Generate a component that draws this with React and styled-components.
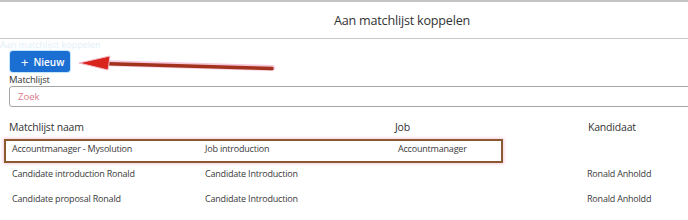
import React from 'react';
import styled, { createGlobalStyle } from 'styled-components';

const GlobalStyle = createGlobalStyle`
  html, body {
    margin: 0;
    padding: 0;
    background: #ffffff;
  }
  body {
    font-family: 'Open Sans', 'Noto Sans', sans-serif;
    color: #333333;
    overflow: hidden;
  }
`;

const Page = styled.div`
  position: relative;
  width: 688px;
  height: 220px;
  overflow: hidden;
  border-top: 2px solid #c4c4c4;
  box-sizing: border-box;
`;

const TitleBar = styled.div`
  height: 37px;
  display: flex;
  align-items: center;
  justify-content: center;
  border-bottom: 1px solid #c9c9c9;
  padding-left: 116px;
  box-sizing: border-box;
`;

const Title = styled.h2`
  margin: 0;
  font-size: 12.6px;
  letter-spacing: -0.2px;
  font-weight: 400;
  color: #333;
`;

const Ghost = styled.div`
  height: 11px;
  font-size: 9px;
  line-height: 11px;
  color: #e2effa;
  white-space: nowrap;
`;

const Content = styled.div`
  padding: 0 0 0 9px;
`;

const NewButton = styled.button`
  display: flex;
  align-items: center;
  gap: 5px;
  height: 21px;
  width: 60px;
  margin: 1px 0 0 1px;
  padding: 0 0 0 11px;
  border: none;
  border-radius: 3px;
  background: #1b6fd3;
  color: #fff;
  font-family: inherit;
  font-size: 10px;
  font-weight: 600;
  box-shadow: 0 0 0 1px #bfe6fb;
`;

const Plus = styled.span`
  font-size: 13px;
  font-weight: 400;
`;

const Label = styled.div`
  margin-top: 3px;
  font-size: 9.5px;
  line-height: 10px;
  letter-spacing: -0.2px;
  color: #333;
`;

const SearchBox = styled.div`
  margin-top: 1px;
  height: 21px;
  width: 700px;
  border: 1px solid #a4a4a4;
  border-radius: 3px;
  box-sizing: border-box;
  display: flex;
  align-items: center;
  padding-left: 8px;
  font-size: 9.5px;
  color: #d8788c;
`;

const Table = styled.div`
  margin-top: 11px;
  display: flex;
  flex-direction: column;
`;

const Row = styled.div`
  display: grid;
  grid-template-columns: 193px 193px 193px 1fr;
  align-items: center;
  height: ${p => (p.$head ? '18px' : '25px')};
  font-size: ${p => (p.$head ? '10.5px' : '9px')};
  letter-spacing: -0.2px;
  color: ${p => (p.$head ? '#333' : '#3a3a3a')};
  padding-left: ${p => (p.$head ? '0' : '3px')};
`;

const Cell = styled.div`
  white-space: nowrap;
  margin-left: ${p => p.$shift || 0}px;
`;

const HighlightBox = styled.div`
  position: absolute;
  left: 4px;
  top: 137px;
  width: 499px;
  height: 24px;
  border: 2px solid #8c5a30;
  box-sizing: border-box;
  box-shadow: 0 0 3px 1px #f7cde0;
  pointer-events: none;
`;

const ArrowLayer = styled.svg`
  position: absolute;
  left: 76px;
  top: 52px;
  pointer-events: none;
`;

const rows = [
  ['Accountmanager - Mysolution', 'Job introduction', 'Accountmanager', ''],
  ['Candidate introduction Ronald', 'Candidate Introduction', '', 'Ronald Anholdd'],
  ['Candidate proposal Ronald', 'Candidate Introduction', '', 'Ronald Anholdd'],
];

export default function App() {
  return (
    <>
      <GlobalStyle />
      <Page>
        <TitleBar>
          <Title>Aan matchlijst koppelen</Title>
        </TitleBar>
        <Ghost>Aan matchlijst koppelen</Ghost>
        <Content>
          <NewButton>
            <Plus>+</Plus> Nieuw
          </NewButton>
          <Label>Matchlijst</Label>
          <SearchBox>Zoek</SearchBox>
          <Table>
            <Row $head>
              <Cell>Matchlijst naam</Cell>
              <Cell />
              <Cell>Job</Cell>
              <Cell>Kandidaat</Cell>
            </Row>
            {rows.map((r, i) => (
              <Row key={i}>
                <Cell>{r[0]}</Cell>
                <Cell>{r[1]}</Cell>
                <Cell>{r[2]}</Cell>
                <Cell $shift={-4}>{r[3]}</Cell>
              </Row>
            ))}
          </Table>
        </Content>
        <HighlightBox />
        <ArrowLayer width="200" height="24" viewBox="0 0 200 24">
          <path d="M24 9 L196 14" stroke="#f6c8dc" strokeWidth="6" strokeLinecap="round" />
          <path d="M24 9.5 L196 14.5" stroke="#a3321c" strokeWidth="3.5" strokeLinecap="round" />
          <path d="M3 9 L34 2 L32 16 Z" fill="#d8241c" stroke="#f3b8c8" strokeWidth="1" />
        </ArrowLayer>
      </Page>
    </>
  );
}
